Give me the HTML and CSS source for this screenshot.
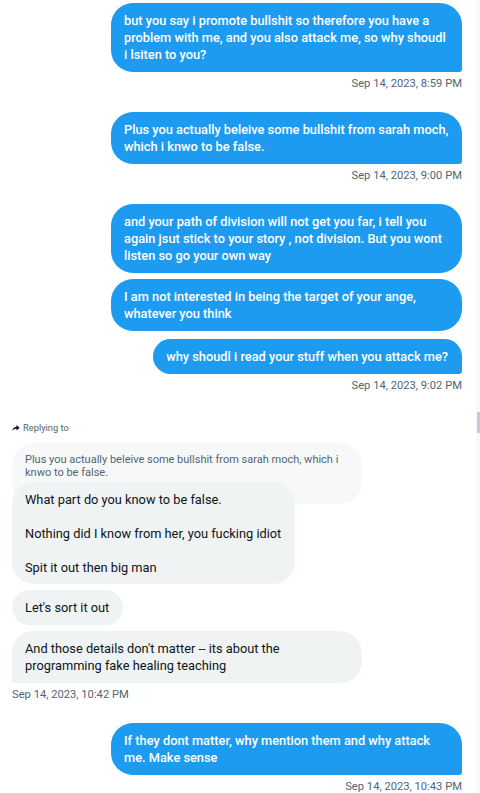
FILE: index.html
```html
<!DOCTYPE html>
<html>
<head>
<meta charset="utf-8">
<link rel="stylesheet" href="styles.css">
</head>
<body>
<div class="page">
  <main class="thread">
    <div class="group sent">
      <div class="bubble wide tail">but you say i promote bullshit so therefore you have a<br>problem with me, and you also attack me, so why shoudl<br>i lsiten to you?</div>
      <div class="time">Sep 14, 2023, 8:59 PM</div>
    </div>
    <div class="group sent">
      <div class="bubble wide tail">Plus you actually beleive some bullshit from sarah moch,<br>which i knwo to be false.</div>
      <div class="time">Sep 14, 2023, 9:00 PM</div>
    </div>
    <div class="group sent">
      <div class="bubble wide">and your path of division will not get you far, i tell you<br>again jsut stick to your story , not division. But you wont<br>listen so go your own way</div>
      <div class="bubble wide">I am not interested in being the target of your ange,<br>whatever you think</div>
      <div class="bubble tail last">why shoudl i read your stuff when you attack me?</div>
      <div class="time">Sep 14, 2023, 9:02 PM</div>
    </div>
    <div class="group received">
      <div class="replying">
        <svg class="reply-icon" viewBox="0 0 10 10" width="8" height="8"><path d="M5.6 1.2 L9.6 4.6 L5.6 8 L5.6 5.9 C3.4 5.9 1.7 6.6 0.4 8.6 C0.9 5.6 2.6 3.6 5.6 3.3 Z" fill="#0f1419"/></svg>
        <span>Replying to</span>
      </div>
      <div class="quote">Plus you actually beleive some bullshit from sarah moch, which i<br>knwo to be false.</div>
      <div class="bubble over">What part do you know to be false.<br><br>Nothing did I know from her, you fucking idiot<br><br>Spit it out then big man</div>
      <div class="bubble">Let's sort it out</div>
      <div class="bubble wide tail">And those details don't matter -- its about the<br>programming fake healing teaching</div>
      <div class="time">Sep 14, 2023, 10:42 PM</div>
    </div>
    <div class="group sent">
      <div class="bubble wide tail">If they dont matter, why mention them and why attack<br>me. Make sense</div>
      <div class="time">Sep 14, 2023, 10:43 PM</div>
    </div>
  </main>
  <aside class="rail"><div class="thumb"></div></aside>
</div>
</body>
</html>
```
FILE: styles.css
```css
* { box-sizing: border-box; }
html, body { margin: 0; padding: 0; background: #ffffff; }
body { font-family: Roboto, "Liberation Sans", Arial, sans-serif; }
.page { display: flex; width: 480px; height: 793px; overflow: hidden; }
.thread { width: 476px; padding: 3px 14px 0 12px; display: flex; flex-direction: column; }
.rail { width: 4px; background: #f7f9f9; position: relative; }
.thumb { position: absolute; top: 412px; left: 1px; width: 3px; height: 21px; background: #c5ccd1; }
.group { display: flex; flex-direction: column; gap: 6px; margin-bottom: 20px; }
.group.sent { align-items: flex-end; }
.group.received { align-items: flex-start; gap: 0; }
.bubble { font-size: 12.8px; line-height: 17px; padding: 9px 14px 9px 13px; border-radius: 22px; width: fit-content; max-width: 351px; white-space: nowrap; }
.bubble.wide { width: 351px; }
.sent .bubble { background: #1d9bf0; color: #ffffff; font-weight: 500; }
.sent .bubble.tail { border-bottom-right-radius: 3px; }
.sent .bubble.last { margin-top: 2px; }
.received .bubble { background: #eff3f4; color: #0f1419; margin-top: 6px; position: relative; }
.received .bubble.wide { width: 350px; }
.received .bubble.tail { border-bottom-left-radius: 3px; }
.received .bubble.over { margin-top: -22px; padding-top: 9px; padding-bottom: 8px; }
.time { font-size: 11.2px; line-height: 16px; color: #536471; margin-top: -2px; white-space: nowrap; }
.received .time { margin-top: 4px; }
.replying { display: flex; align-items: center; gap: 3px; font-size: 9.3px; line-height: 12px; color: #536471; margin-top: 8px; margin-bottom: 9px; }
.reply-icon { display: block; }
.quote { width: 350px; background: #f7f9f9; color: #536471; font-size: 11px; line-height: 13px; padding: 10px 13px 25px 13px; border-radius: 22px; white-space: nowrap; }
```
